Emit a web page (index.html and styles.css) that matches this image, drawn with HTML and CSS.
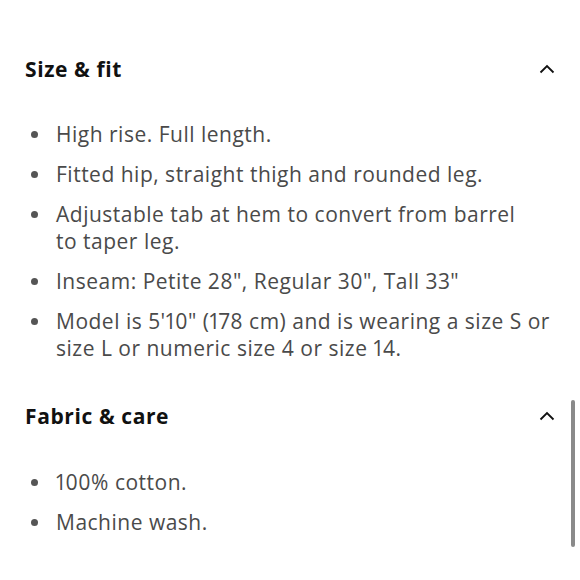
FILE: index.html
```html
<!DOCTYPE html>
<html>
<head>
<meta charset="utf-8">
<link rel="stylesheet" href="styles.css">
</head>
<body>
<div class="page">
  <section class="section first">
    <div class="head">
      <h2>Size &amp; fit</h2>
      <svg class="chev" width="16" height="10" viewBox="0 0 16 10"><path d="M1.5 8.5 L8 2 L14.5 8.5" fill="none" stroke="#111" stroke-width="1.8"/></svg>
    </div>
    <ul class="list">
      <li>High rise. Full length.</li>
      <li>Fitted hip, straight thigh and rounded leg.</li>
      <li>Adjustable tab at hem to convert from barrel<br>to taper leg.</li>
      <li>Inseam: Petite 28", Regular 30", Tall 33"</li>
      <li>Model is 5'10" (178 cm) and is wearing a size S or size L or numeric size 4 or size 14.</li>
    </ul>
  </section>
  <section class="section">
    <div class="head">
      <h2>Fabric &amp; care</h2>
      <svg class="chev" width="16" height="10" viewBox="0 0 16 10"><path d="M1.5 8.5 L8 2 L14.5 8.5" fill="none" stroke="#111" stroke-width="1.8"/></svg>
    </div>
    <ul class="list">
      <li>100% cotton.</li>
      <li>Machine wash.</li>
    </ul>
  </section>
  <div class="scrollbar"></div>
</div>
</body>
</html>
```
FILE: styles.css
```css
html, body { margin: 0; padding: 0; background: #fff; }
body { font-family: "Open Sans", Lato, sans-serif; }
.page { position: relative; width: 580px; height: 580px; overflow: hidden; padding: 0 25px; box-sizing: border-box; }
.section.first { padding-top: 54px; }
.head { display: flex; justify-content: space-between; align-items: center; }
.head h2 { margin: 0; font-size: 21px; font-weight: 700; color: #111; line-height: 30px; letter-spacing: 0.6px; }
.list { list-style: none; margin: 0; padding: 0; }
.section.first .list { margin-top: 37px; margin-bottom: 39px; }
.section:not(.first) .list { margin-top: 38px; }
.list li { position: relative; padding-left: 31px; font-size: 21px; line-height: 27px; color: #4a4a4a; margin-bottom: 13px; padding-right: 0; letter-spacing: 0.5px; font-variant-numeric: proportional-nums; }
.list li::before { content: ""; position: absolute; left: 6px; top: 10px; width: 7px; height: 7px; border-radius: 50%; background: #555; }
.scrollbar { position: absolute; right: 5px; top: 400px; width: 4px; height: 147px; border-radius: 2px; background: #8a8a8a; }
```
